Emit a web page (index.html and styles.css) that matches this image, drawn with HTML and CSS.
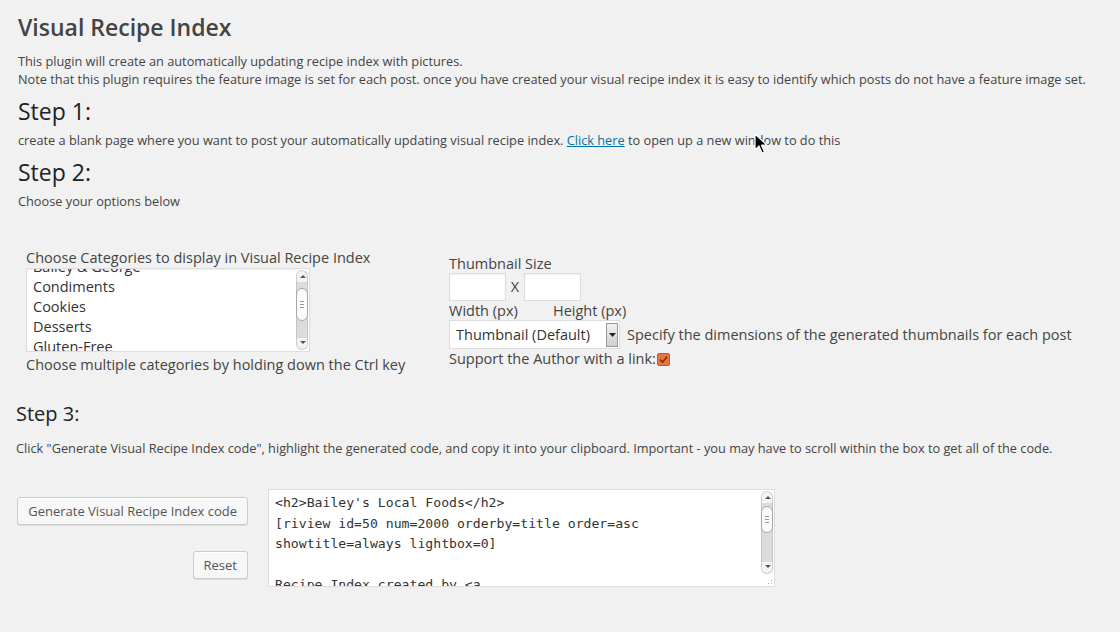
FILE: index.html
```html
<!DOCTYPE html>
<html>
<head>
<meta charset="utf-8">
<link rel="stylesheet" href="styles.css">
</head>
<body>
<div class="wrap">
  <h1 class="title">Visual Recipe Index</h1>
  <p class="intro">This plugin will create an automatically updating recipe index with pictures.<br>Note that this plugin requires the feature image is set for each post. once you have created your visual recipe index it is easy to identify which posts do not have a feature image set.</p>

  <h2 class="step">Step 1:</h2>
  <p class="desc">create a blank page where you want to post your automatically updating visual recipe index. <a href="#" class="link">Click here</a> to open up a new window to do this</p>

  <h2 class="step">Step 2:</h2>
  <p class="desc">Choose your options below</p>

  <div class="options">
    <div class="cats">
      <div class="label">Choose Categories to display in Visual Recipe Index</div>
      <div class="listbox">
        <div class="list-items">
          <div class="item">Bailey &amp; George</div>
          <div class="item">Condiments</div>
          <div class="item">Cookies</div>
          <div class="item">Desserts</div>
          <div class="item">Gluten-Free</div>
        </div>
        <div class="sbar">
          <div class="sarrow up"></div>
          <div class="strack"><div class="sthumb t1"><span></span><span></span><span></span></div></div>
          <div class="sarrow down"></div>
        </div>
      </div>
      <div class="label hint">Choose multiple categories by holding down the Ctrl key</div>
    </div>

    <div class="thumbs">
      <div class="label">Thumbnail Size</div>
      <div class="dims">
        <div class="inp"></div>
        <span class="x">X</span>
        <div class="inp"></div>
      </div>
      <div class="dimlabels"><span class="wlab">Width (px)</span><span>Height (px)</span></div>
      <div class="selrow">
        <div class="select"><span>Thumbnail (Default)</span><div class="selbtn"><svg width="7" height="4" viewBox="0 0 7 4"><path d="M0 0h7L3.5 4z" fill="#222"/></svg></div></div>
        <span class="label">Specify the dimensions of the generated thumbnails for each post</span>
      </div>
      <div class="label support">Support the Author with a link:<svg class="check" width="13" height="13" viewBox="0 0 13 13"><rect x="0.5" y="0.5" width="12" height="12" rx="1.5" fill="#e8743f" stroke="#c9562a"/><path d="M3 6.5l2.5 2.7L10.2 3.6" fill="none" stroke="#7a2e10" stroke-width="1.6"/></svg></div>
    </div>
  </div>

  <h3 class="step3">Step 3:</h3>
  <p class="desc s3">Click "Generate Visual Recipe Index code", highlight the generated code, and copy it into your clipboard. Important - you may have to scroll within the box to get all of the code.</p>

  <div class="gen">
    <div class="btns">
      <button class="btn">Generate Visual Recipe Index code</button>
      <button class="btn">Reset</button>
    </div>
    <div class="code">
      <pre class="code-text">&lt;h2&gt;Bailey's Local Foods&lt;/h2&gt;
[riview id=50 num=2000 orderby=title order=asc
showtitle=always lightbox=0]

Recipe Index created by &lt;a</pre>
      <div class="sbar code-bar">
        <div class="sarrow up"></div>
        <div class="strack"><div class="sthumb t2"><span></span><span></span><span></span></div></div>
        <div class="sarrow down"></div>
        <div class="grip"></div>
      </div>
    </div>
  </div>
</div>
<svg class="cursor" width="14" height="22" viewBox="0 0 14 22"><path d="M1 1v16l4-4 3 7 2.5-1-3-6.8H13z" fill="#000" stroke="#fff" stroke-width="1.2" stroke-linejoin="round"/></svg>
</body>
</html>
```
FILE: styles.css
```css
html, body {
  margin: 0;
  background: #f1f1f1;
}
body {
  font-family: "Open Sans", "Liberation Sans", sans-serif;
  font-size: 12.75px;
  line-height: 18px;
  color: #444;
  position: relative;
  width: 1120px;
  height: 632px;
  overflow: hidden;
}
.wrap {
  padding: 13px 0 0 18px;
}
.title {
  font-size: 23px;
  font-weight: 600;
  line-height: 29px;
  margin: 0;
  color: #444;
}
.intro {
  margin: 10px 0 0;
}
.step {
  font-size: 23px;
  font-weight: 400;
  line-height: 29px;
  margin: 9px 0 0;
  color: #222;
}
.desc {
  margin: 5px 0 0;
}
.link {
  color: #0074a2;
  text-decoration: underline;
}
.options {
  display: flex;
  margin-top: 38px;
  padding-left: 8px;
}
.label {
  font-size: 14.5px;
  line-height: 20px;
  color: #444;
}
.cats {
  width: 423px;
}
.listbox {
  width: 282px;
  height: 82px;
  border: 1px solid #ddd;
  background: #fff;
  display: flex;
  overflow: hidden;
  box-shadow: inset 0 1px 2px rgba(0,0,0,.07);
}
.hint {
  margin-top: 3px;
}
.list-items {
  flex: 1;
  margin-top: -12px;
  padding-left: 6px;
}
.item {
  font-size: 14.5px;
  line-height: 20px;
  color: #333;
}
.sbar {
  width: 12px;
  display: flex;
  flex-direction: column;
  background: #fff;
  padding: 1px 1px 1px 0;
}
.sarrow {
  height: 11px;
  position: relative;
  border: 1px solid #ccc;
  border-radius: 5px;
  background: #f4f4f4;
}
.sarrow.up { border-bottom: none; border-radius: 6px 6px 0 0; }
.sarrow.down { border-top: none; border-radius: 0 0 6px 6px; }
.sarrow::after {
  content: "";
  position: absolute;
  left: 3px;
  border-left: 3px solid transparent;
  border-right: 3px solid transparent;
}
.sarrow.up::after { top: 4px; border-bottom: 3px solid #555; }
.sarrow.down::after { top: 3px; border-top: 3px solid #555; }
.strack {
  flex: 1;
  background: #dcdcdc;
  border-left: 1px solid #c4c4c4;
  border-right: 1px solid #c4c4c4;
  position: relative;
}
.sthumb {
  position: absolute;
  left: -1px;
  right: -1px;
  background: #fbfbfb;
  border: 1px solid #a8a8a8;
  border-radius: 6px;
  display: flex;
  flex-direction: column;
  align-items: center;
  justify-content: center;
  gap: 2px;
}
.sthumb span {
  width: 4px;
  height: 1px;
  background: #999;
}
.t1 { top: 6px; height: 31px; }
.t2 { top: 3px; height: 25px; }
.thumbs {
  padding-top: 6px;
}
.dims {
  display: flex;
  align-items: center;
  margin-top: -1px;
}
.inp {
  width: 55px;
  height: 26px;
  background: #fff;
  border: 1px solid #ddd;
  box-shadow: inset 0 1px 2px rgba(0,0,0,.07);
}
.x {
  font-size: 14.5px;
  width: 18px;
  text-align: center;
}
.dimlabels {
  font-size: 14.5px;
  line-height: 18px;
  margin-top: 1px;
}
.wlab {
  display: inline-block;
  width: 104px;
}
.selrow {
  display: flex;
  align-items: center;
  gap: 7px;
}
.select {
  width: 163px;
  height: 27px;
  background: #fff;
  border: 1px solid #ddd;
  display: flex;
  align-items: center;
  justify-content: space-between;
  padding-left: 6px;
  font-size: 14.5px;
  color: #333;
}
.selbtn {
  width: 10px;
  height: 22px;
  margin-right: 1px;
  background: linear-gradient(#f2f2f2, #cfcfcf);
  border: 1px solid #999;
  display: flex;
  align-items: center;
  justify-content: center;
}
.support {
  line-height: 18px;
  margin-top: 1px;
  display: flex;
  align-items: center;
}
.check {
  margin-left: 1px;
  margin-top: 1px;
}
.step3 {
  font-size: 20px;
  font-weight: 400;
  line-height: 26px;
  margin: 26px 0 0 -2px;
  color: #222;
}
.s3 {
  margin: 12px 0 0 -2px;
}
.gen {
  display: flex;
  margin-top: 32px;
  margin-left: -2px;
}
.btns {
  width: 232px;
  display: flex;
  flex-direction: column;
  align-items: flex-end;
  padding-top: 8px;
  gap: 26px;
  margin-right: 20px;
}
.btn {
  font-family: "Open Sans", "Liberation Sans", sans-serif;
  font-size: 13px;
  line-height: 26px;
  height: 28px;
  padding: 0 10px;
  color: #555;
  background: #f7f7f7;
  border: 1px solid #ccc;
  border-radius: 3px;
  box-shadow: inset 0 1px 0 #fff, 0 1px 0 rgba(0,0,0,.08);
  white-space: nowrap;
}
.code {
  width: 505px;
  height: 96px;
  background: #fff;
  border: 1px solid #ddd;
  display: flex;
  overflow: hidden;
}
.code-text {
  flex: 1;
  margin: 0;
  padding: 3px 6px;
  font-family: "DejaVu Sans Mono", monospace;
  font-size: 13.15px;
  line-height: 20.5px;
  color: #333;
  overflow: hidden;
}
.code-bar {
  position: relative;
  padding-bottom: 12px;
}
.grip {
  position: absolute;
  right: 0;
  bottom: 0;
  width: 10px;
  height: 10px;
  background: radial-gradient(circle, #aaa 0.7px, transparent 0.8px) 0 0 / 3px 3px;
  clip-path: polygon(100% 0, 100% 100%, 0 100%);
}
.cursor {
  position: absolute;
  left: 754px;
  top: 133px;
}
```
